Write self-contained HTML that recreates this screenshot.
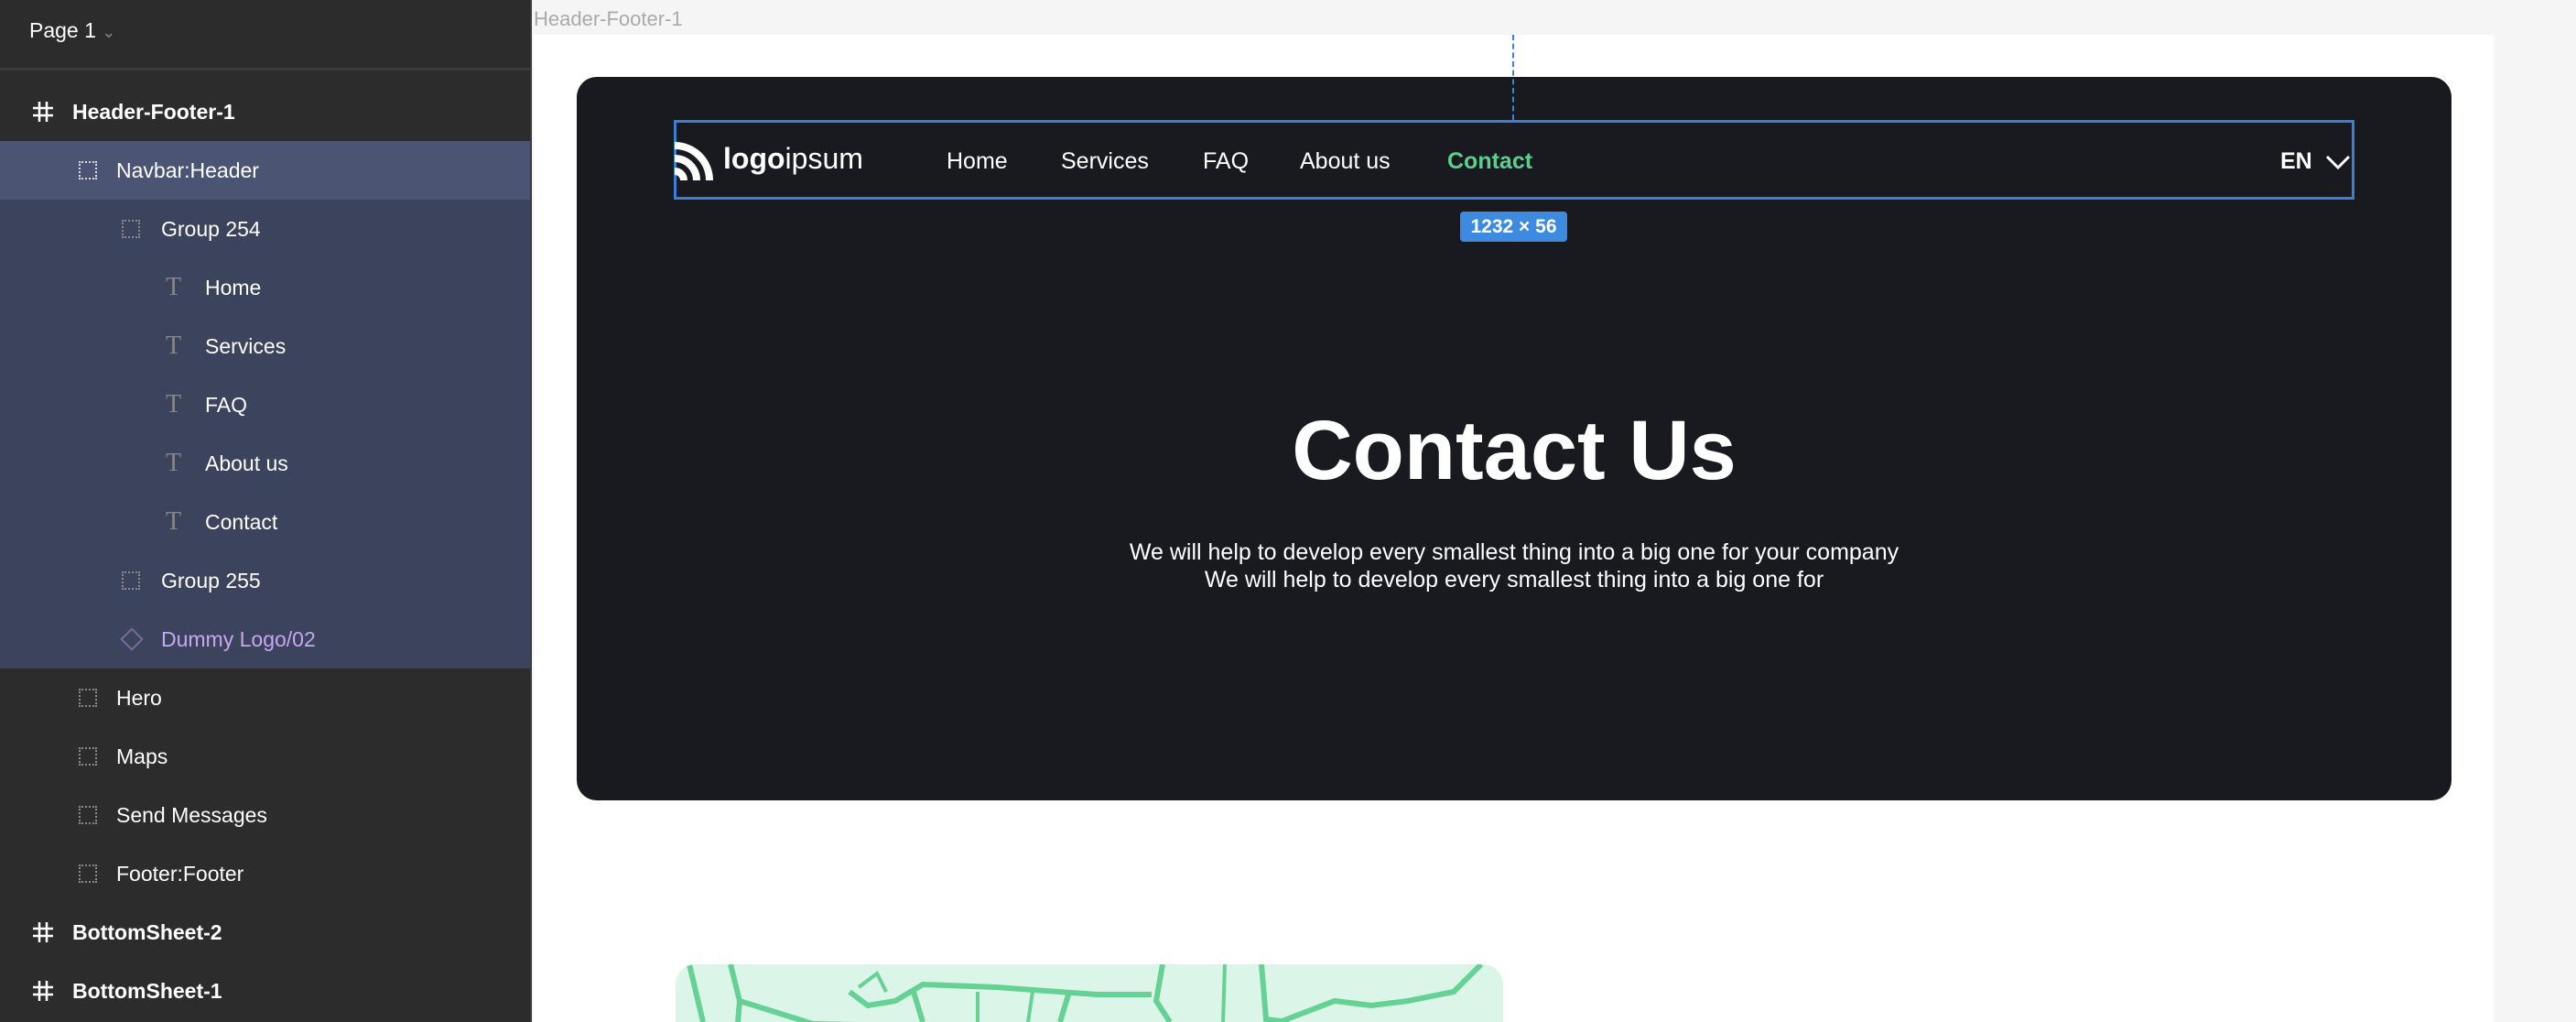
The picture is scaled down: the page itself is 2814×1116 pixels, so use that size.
<!DOCTYPE html>
<html><head><meta charset="utf-8"><style>
*{margin:0;padding:0;box-sizing:border-box}
html,body{width:2814px;height:1116px;overflow:hidden}
body{background:#f5f5f5;font-family:"Liberation Sans",sans-serif;position:relative}
#side{position:absolute;left:0;top:0;width:581px;height:1116px;background:#2c2c2c;border-right:2px solid #3a3a3a}
.pg{position:absolute;left:32px;top:20px;color:#fff;font-size:23px}
.hl{position:absolute;left:0;width:579px;top:74px;height:3px;background:#3d3d3d}
.row{position:absolute;left:0;width:579px;height:64px;color:#fff;font-size:23px;line-height:64px}
.row span,.row svg{position:absolute}
.ic{position:absolute;top:22px;width:20px;height:20px;border:2px dotted #8a8a8a}
.t{position:absolute;color:#888;font-family:"Liberation Serif",serif;font-size:28px}
.b{font-weight:bold}
#frame{position:absolute;left:583px;top:38px;width:2141px;height:1078px;background:#fff}
.lbl{position:absolute;left:583px;top:8px;font-size:22px;color:#aaa}
#card{position:absolute;left:630px;top:84px;width:2048px;height:790px;background:#191a1f;border-radius:22px}
.nav{position:absolute;color:#fff;font-size:25px;top:162px}
</style></head><body>
<div id="side">
<div class="pg">Page 1 <span style="color:#888;font-size:18px">&#8964;</span></div>
<div class="hl"></div>
<div style="position:absolute;left:0;top:154px;width:579px;height:64px;background:#4b5573"></div>
<div style="position:absolute;left:0;top:218px;width:579px;height:512px;background:#3b435d"></div>
<div class="row b" style="top:90px"><svg style="left:36px;top:21px" width="22" height="22"><path d="M7 0V22M15 0V22M0 7H22M0 15H22" stroke="#fff" stroke-width="2.5"/></svg><span style="left:79px">Header-Footer-1</span></div>
<div class="row" style="top:154px"><span class="ic" style="left:86px;border-color:#ddd"></span><span style="left:127px">Navbar:Header</span></div>
<div class="row" style="top:218px"><span class="ic" style="left:133px"></span><span style="left:176px">Group 254</span></div>
<div class="row" style="top:282px"><span class="t" style="left:181px">T</span><span style="left:224px">Home</span></div>
<div class="row" style="top:346px"><span class="t" style="left:181px">T</span><span style="left:224px">Services</span></div>
<div class="row" style="top:410px"><span class="t" style="left:181px">T</span><span style="left:224px">FAQ</span></div>
<div class="row" style="top:474px"><span class="t" style="left:181px">T</span><span style="left:224px">About us</span></div>
<div class="row" style="top:538px"><span class="t" style="left:181px">T</span><span style="left:224px">Contact</span></div>
<div class="row" style="top:602px"><span class="ic" style="left:133px"></span><span style="left:176px">Group 255</span></div>
<div class="row" style="top:666px;color:#c7a6f2"><span style="left:135px;top:23px;width:18px;height:18px;border:2px solid #7a6a9a;transform:rotate(45deg)"></span><span style="left:176px">Dummy Logo/02</span></div>
<div class="row" style="top:730px"><span class="ic" style="left:86px"></span><span style="left:127px">Hero</span></div>
<div class="row" style="top:794px"><span class="ic" style="left:86px"></span><span style="left:127px">Maps</span></div>
<div class="row" style="top:858px"><span class="ic" style="left:86px"></span><span style="left:127px">Send Messages</span></div>
<div class="row" style="top:922px"><span class="ic" style="left:86px"></span><span style="left:127px">Footer:Footer</span></div>
<div class="row b" style="top:986px"><svg style="left:36px;top:21px" width="22" height="22"><path d="M7 0V22M15 0V22M0 7H22M0 15H22" stroke="#fff" stroke-width="2.5"/></svg><span style="left:79px">BottomSheet-2</span></div>
<div class="row b" style="top:1050px"><svg style="left:36px;top:21px" width="22" height="22"><path d="M7 0V22M15 0V22M0 7H22M0 15H22" stroke="#fff" stroke-width="2.5"/></svg><span style="left:79px">BottomSheet-1</span></div>
</div>
<div class="lbl">Header-Footer-1</div>
<div id="frame"></div>
<div id="card"></div>
<div style="position:absolute;left:1652px;top:38px;height:93px;border-left:2px dashed #3b82d9"></div>
<div style="position:absolute;left:736px;top:131px;width:1836px;height:87px;border:3px solid #3b7fd6"></div>
<svg style="position:absolute;left:737px;top:155px" width="42" height="42" viewBox="0 0 42 42" fill="none" stroke="#fff" stroke-width="8"><path d="M0 4 A38 38 0 0 1 38 42"/><path d="M0 18 A24 24 0 0 1 24 42"/><path d="M0 32 A10 10 0 0 1 10 42"/></svg>
<div style="position:absolute;left:790px;top:155px;color:#fff;font-size:32px"><b>logo</b>ipsum</div>
<div class="nav" style="left:1034px">Home</div>
<div class="nav" style="left:1159px">Services</div>
<div class="nav" style="left:1314px">FAQ</div>
<div class="nav" style="left:1420px">About us</div>
<div class="nav" style="left:1581px;color:#5ccf8f;font-weight:bold">Contact</div>
<div class="nav" style="left:2491px;font-weight:bold">EN</div>
<svg style="position:absolute;left:2540px;top:168px" width="28" height="18"><path d="M2 3 L14 15 L26 3" stroke="#fff" stroke-width="3" fill="none"/></svg>
<div style="position:absolute;left:1595px;top:231px;width:117px;height:33px;background:#3d8ae0;border-radius:4px;color:#fff;font-size:21px;font-weight:bold;text-align:center;line-height:33px">1232 × 56</div>
<div style="position:absolute;left:630px;width:2048px;top:440px;text-align:center;color:#fff;font-size:92px;font-weight:bold">Contact Us</div>
<div style="position:absolute;left:630px;width:2048px;top:588px;text-align:center;color:#fff;font-size:25px;line-height:30px">We will help to develop every smallest thing into a big one for your company<br>We will help to develop every smallest thing into a big one for</div>
<div style="position:absolute;left:738px;top:1053px;width:904px;height:63px;background:#dbf5e8;border-radius:22px 22px 0 0;overflow:hidden">
<svg width="904" height="63" viewBox="0 0 904 63" fill="none" stroke="#66d194" stroke-width="6">
<path d="M15 0 L30 63"/><path d="M60 0 L70 40 L68 63"/><path d="M70 40 L150 65 L290 68"/><path d="M190 30 L210 45 L240 40 L270 22 L350 25 L460 33 L520 33"/><path d="M260 30 L270 63"/><path d="M330 30 L330 63" stroke-width="4"/><path d="M390 30 L385 63" stroke-width="4"/><path d="M430 30 L420 63"/><path d="M532 0 L525 40 L540 63"/><path d="M600 0 L598 63" stroke-width="4"/><path d="M640 0 L645 60 L670 63"/><path d="M660 63 L720 40 L760 45 L800 40 L850 30 L880 0"/><path d="M200 25 L220 10 L230 30" stroke-width="4"/></svg></div>
</body></html>
